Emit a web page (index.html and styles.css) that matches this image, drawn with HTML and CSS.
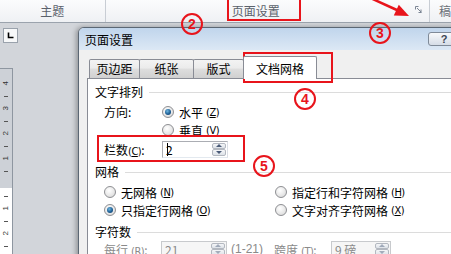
FILE: index.html
```html
<!DOCTYPE html>
<html>
<head>
  <title>页面设置</title>
  <meta charset="UTF-8">
  <link rel="stylesheet" href="styles.css">
</head>
<body>
  <div class="word">
    <div class="ribbon">
      <div class="grp grp-theme">主题</div>
      <div class="grp grp-page">
        <span class="grp-label">页面设置</span>
        <svg class="launcher" width="7" height="7" viewBox="0 0 7 7">
          <path d="M0.5 3.5V0.5H3.5" fill="none" stroke="#7b8594" stroke-width="1"/>
          <path d="M2 2L6 6M6 3.5V6.5M3.5 6.5H6.5" fill="none" stroke="#7b8594" stroke-width="1"/>
        </svg>
      </div>
      <div class="grp grp-next">稿</div>
    </div>
    <div class="work">
      <div class="ruler-col">
        <div class="tabstop">
          <svg width="7" height="7" viewBox="0 0 7 7"><path d="M1.5 0.5V5.5H6.5" fill="none" stroke="#000" stroke-width="1.6"/></svg>
        </div>
        <div class="vruler">
          <span class="rn">4</span><span class="rt"></span>
          <span class="rn">3</span><span class="rt"></span>
          <span class="rn">2</span><span class="rt"></span>
          <span class="rn">1</span><span class="rt"></span>
          <span class="rn"></span><span class="rt"></span>
          <span class="rn">1</span><span class="rt"></span>
          <span class="rn">2</span><span class="rt"></span>
        </div>
      </div>
    </div>
  </div>

  <div class="dialog">
    <div class="dlg-title">
      <span>页面设置</span>
      <span class="help">?</span>
    </div>
    <div class="dlg-body">
      <div class="tabs">
        <div class="tab t1">页边距</div>
        <div class="tab t2">纸张</div>
        <div class="tab t3">版式</div>
        <div class="tab active">文档网格</div>
      </div>
      <div class="panel">
        <div class="grp-title">文字排列</div>
        <div class="dir-row">
          <span class="field-label">方向:</span>
          <div>
            <div class="radio-line"><span class="radio on"></span>水平<span class="key">(<u>Z</u>)</span></div>
            <div class="radio-line"><span class="radio"></span>垂直<span class="key">(<u>V</u>)</span></div>
          </div>
        </div>
        <div class="field-row">
          <span class="field-label">栏数<span class="key">(<u>C</u>)</span>:</span>
          <div class="spin">
            <span class="spin-val">2<i class="caret"></i></span>
            <span class="spin-btns"><b class="up"></b><b class="down"></b></span>
          </div>
        </div>
        <div class="grp-title title-grid">网格</div>
        <div class="grid-opts">
          <div class="radio-line"><span class="radio"></span>无网格<span class="key">(<u>N</u>)</span></div>
          <div class="radio-line"><span class="radio"></span>指定行和字符网格<span class="key">(<u>H</u>)</span></div>
          <div class="radio-line"><span class="radio on"></span>只指定行网格<span class="key">(<u>O</u>)</span></div>
          <div class="radio-line"><span class="radio"></span>文字对齐字符网格<span class="key">(<u>X</u>)</span></div>
        </div>
        <div class="grp-title title-chars">字符数</div>
        <div class="field-row disabled">
          <span class="field-label">每行<span class="key">(<u>R</u>)</span>:</span>
          <div class="spin">
            <span class="spin-val">21</span>
            <span class="spin-btns"><b class="up"></b><b class="down"></b></span>
          </div>
          <span class="range">(1-21)</span>
          <span class="field-label">跨度<span class="key">(<u>T</u>)</span>:</span>
          <div class="spin spin-pt">
            <span class="spin-val">9 磅</span>
            <span class="spin-btns"><b class="up"></b><b class="down"></b></span>
          </div>
        </div>
      </div>
    </div>
  </div>

  <!-- red annotations drawn over the screenshot -->
  <div class="mark-box box-ribbon"></div>
  <div class="mark-box box-tab"></div>
  <div class="mark-box box-field"></div>
  <div class="num n2">2</div>
  <div class="num n3">3</div>
  <div class="num n4">4</div>
  <div class="num n5">5</div>
  <svg class="arrow" width="451" height="254" viewBox="0 0 451 254">
    <line x1="366" y1="-4" x2="398" y2="10.5" stroke="#e8141b" stroke-width="2.5"/>
    <polygon points="409,16 393.8,15.5 398.8,4.7" fill="#e8141b"/>
  </svg>
</body>
</html>
```

FILE: styles.css
```css
* {
  box-sizing: border-box;
}

body {
  margin: 0;
  width: 451px;
  height: 254px;
  overflow: hidden;
  position: relative;
  font-family: "Noto Sans CJK SC", "Noto Sans", sans-serif;
  font-size: 12px;
  color: #000;
  background-color: #d2d5da;
}

/* mnemonic key in parentheses, e.g. (Z) */
.key {
  margin-left: 3px;
  font-family: "DejaVu Sans Condensed", "Liberation Sans", sans-serif;
  font-size: 11px;
  letter-spacing: -0.5px;
}

.key u {
  text-decoration: underline;
  text-underline-offset: 1px;
}

/* word window behind the dialog */
.word {
  display: flex;
  flex-direction: column;
  height: 254px;
}

.ribbon {
  display: flex;
  height: 23px;
  background: linear-gradient(#fbfcfd, #eff1f4);
  border-bottom: 1px solid #9ba3ad;
  color: #5a616b;
  line-height: 22px;
}

.grp {
  display: flex;
  align-items: center;
  border-right: 1px solid #c8cdd4;
}

.grp-theme {
  width: 106px;
  justify-content: center;
}

.grp-page {
  width: 325px;
  padding-left: 126px;
  padding-right: 7px;
}

.launcher {
  margin-left: auto;
  margin-top: -4px;
}

.grp-next {
  border-right: none;
  padding-left: 9px;
  color: #6a7078;
}

.work {
  flex: 1;
  display: flex;
}

.ruler-col {
  display: flex;
  flex-direction: column;
  align-items: flex-start;
}

.tabstop {
  width: 15px;
  height: 15px;
  margin: 5px 0 0 3px;
  border: 1px solid #9aa2ac;
  background-color: #f7f8f9;
  display: flex;
  justify-content: center;
  align-items: center;
}

.vruler {
  flex: 1;
  width: 13px;
  margin-top: 25px;
  padding-top: 8px;
  border: 1px solid #8e96a0;
  border-left: none;
  border-bottom: none;
  background: linear-gradient(#cdd1d7 0, #cdd1d7 119px, #fff 119px);
  display: flex;
  flex-direction: column;
  align-items: center;
}

.rn {
  height: 12.5px;
  font-family: "Liberation Sans", sans-serif;
  font-size: 8px;
  line-height: 12.5px;
  color: #333;
  transform: rotate(-90deg);
}

.rt {
  height: 12.5px;
  width: 4px;
  background: linear-gradient(transparent 6px, #555 6px, #555 7px, transparent 7px);
}

/* page setup dialog */
.dialog {
  position: absolute;
  left: 78px;
  top: 27px;
  width: 390px;
  height: 240px;
  border: 1px solid #5b6774;
  border-radius: 6px 6px 0 0;
  background-color: #f0f0f0;
  box-shadow: -2px 0 5px rgba(0, 0, 0, 0.3);
  overflow: hidden;
}

.dlg-title {
  height: 22px;
  display: flex;
  align-items: center;
  padding-left: 6px;
  background: linear-gradient(#c0d5ec, #dce8f5);
}

.help {
  margin-left: auto;
  margin-right: 7px;
  width: 32px;
  height: 14px;
  border: 1px solid #7f8a98;
  border-radius: 3px;
  background: linear-gradient(#f7f9fb, #d6dde7);
  font-family: "Liberation Sans", sans-serif;
  font-weight: bold;
  font-size: 11px;
  line-height: 12px;
  text-align: center;
  color: #3c4654;
}

.dlg-body {
  padding: 6px 0 0 8px;
}

.tabs {
  display: flex;
  align-items: flex-end;
  padding-left: 2px;
}

.tab {
  height: 19px;
  line-height: 18px;
  text-align: center;
  border: 1px solid #898c95;
  border-bottom: none;
  border-radius: 2px 2px 0 0;
  margin-right: -1px;
  background: linear-gradient(#f3f3f3, #ebebeb 45%, #dedede 50%, #d0d0d0);
}

.t1 {
  width: 51px;
}

.t2 {
  width: 55px;
}

.t3 {
  width: 51px;
}

.tab.active {
  position: relative;
  z-index: 1;
  width: 74px;
  height: 23px;
  padding-top: 3px;
  margin-bottom: -1px;
  background: #fff;
}

.panel {
  width: 380px;
  height: 200px;
  padding-left: 7px;
  background-color: #fff;
  border: 1px solid #898c95;
}

.grp-title {
  display: flex;
  align-items: center;
  height: 16px;
  line-height: 16px;
  margin-top: 5px;
}

.grp-title::after {
  content: "";
  flex: 1;
  height: 1px;
  margin-left: 6px;
  background-color: #dcdcdc;
}

.title-grid {
  margin-top: 6px;
}

.dir-row {
  display: grid;
  grid-template-columns: 58px auto;
  padding-left: 9px;
  margin-top: 3px;
}

.dir-row .field-label {
  line-height: 18px;
}

.radio-line {
  display: flex;
  align-items: center;
  height: 18px;
  white-space: nowrap;
}

.radio {
  position: relative;
  width: 12px;
  height: 12px;
  margin-right: 5px;
  border: 1px solid #8e8f93;
  border-radius: 50%;
  background: radial-gradient(circle at 40% 35%, #fff, #e6e6e6 60%, #cfcfcf);
}

.radio.on::after {
  content: "";
  position: absolute;
  left: 2px;
  top: 2px;
  width: 6px;
  height: 6px;
  border-radius: 50%;
  background: radial-gradient(circle at 40% 35%, #6fb6e0, #1d5f95 55%, #0c3560);
}

.field-row {
  display: flex;
  align-items: center;
  height: 18px;
  padding-left: 9px;
  margin-top: 1px;
  white-space: nowrap;
}

.field-label {
  width: 58px;
}

.field-row .field-label .key {
  margin-left: 0;
}

.spin {
  display: flex;
  width: 66px;
  height: 17px;
  border: 1px solid #abadb3;
  border-right-color: #dbdfe6;
  border-bottom-color: #e3e9ef;
  background-color: #fff;
}

.spin-val {
  flex: 1;
  position: relative;
  padding-left: 3px;
  line-height: 15px;
}

.caret {
  position: absolute;
  left: 4px;
  top: 1px;
  width: 1px;
  height: 13px;
  background-color: #000;
}

.spin-btns {
  display: flex;
  flex-direction: column;
  width: 15px;
  padding: 1px 1px 1px 0;
}

.spin-btns b {
  flex: 1;
  border: 1px solid #b3b8c0;
  border-radius: 2px;
  background: linear-gradient(#f5f6f8, #dde2e8);
  display: flex;
  justify-content: center;
  align-items: center;
}

.spin-btns b::after {
  content: "";
  border-left: 3px solid transparent;
  border-right: 3px solid transparent;
}

.spin-btns .up::after {
  border-bottom: 3px solid #4a5b78;
}

.spin-btns .down::after {
  border-top: 3px solid #4a5b78;
}

.grid-opts {
  display: grid;
  grid-template-columns: 171px auto;
  padding-left: 9px;
  margin-top: 3px;
}

.title-chars {
  margin-top: 5px;
}

.disabled {
  margin-top: 0;
  color: #8a8a8a;
}

.disabled .field-label {
  width: 57px;
}

.disabled .field-label .key {
  margin-left: 3px;
}

.disabled .spin {
  border-color: #c8cacd;
  background-color: #f6f6f6;
}

.disabled .spin-btns b::after {
  opacity: 0.45;
}

.range {
  width: 43px;
  margin-left: 4px;
  font-family: "Liberation Sans", sans-serif;
}

.spin-pt {
  width: 60px;
}

/* annotations */
.mark-box {
  position: absolute;
  border: 2px solid #e8141b;
}

.box-ribbon {
  left: 227px;
  top: -3px;
  width: 74px;
  height: 24px;
}

.box-tab {
  left: 243px;
  top: 52px;
  width: 90px;
  height: 31px;
}

.box-field {
  left: 97px;
  top: 135px;
  width: 148px;
  height: 27px;
}

.num {
  position: absolute;
  width: 22px;
  height: 22px;
  border: 2px solid #e8141b;
  border-radius: 50%;
  color: #e8141b;
  font-family: "Liberation Sans", sans-serif;
  font-weight: bold;
  font-size: 14px;
  line-height: 18px;
  text-align: center;
}

.n2 {
  left: 181px;
  top: 13px;
}

.n3 {
  left: 369px;
  top: 22px;
}

.n4 {
  left: 294px;
  top: 88px;
}

.n5 {
  left: 253px;
  top: 155px;
}

.arrow {
  position: absolute;
  left: 0;
  top: 0;
}
```
